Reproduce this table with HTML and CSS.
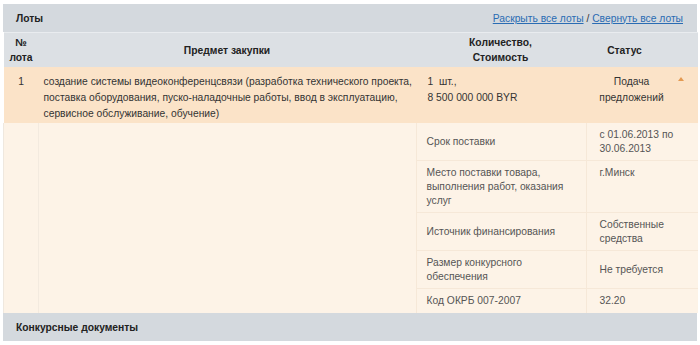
FILE: index.html
```html
<!DOCTYPE html>
<html lang="ru">
<head>
<meta charset="utf-8">
<title>Лоты</title>
<link rel="stylesheet" href="styles.css">
</head>
<body>
<div class="panel">
  <div class="bar">
    <span class="bar-title">Лоты</span>
    <span class="bar-links"><a href="#">Раскрыть все лоты</a> / <a href="#">Свернуть все лоты</a></span>
  </div>
  <table class="lots">
    <colgroup>
      <col class="c-no"><col class="c-subj"><col class="c-qty"><col class="c-status"><col class="c-arrow">
    </colgroup>
    <thead>
      <tr>
        <th>№<br>лота</th>
        <th>Предмет закупки</th>
        <th>Количество,<br>Стоимость</th>
        <th class="th-status">Статус</th>
        <th></th>
      </tr>
    </thead>
    <tbody>
      <tr class="lot-row">
        <td class="no">1</td>
        <td class="subj">создание системы видеоконференцсвязи (разработка технического проекта, поставка оборудования, пуско-наладочные работы, ввод в эксплуатацию, сервисное обслуживание, обучение)</td>
        <td class="qty">1&nbsp; шт.,<br>8 500 000 000 BYR</td>
        <td class="status">Подача<br>предложений</td>
        <td class="arrow"><span class="tri"></span></td>
      </tr>
      <tr class="detail-row">
        <td class="d-no"></td>
        <td class="d-subj"></td>
        <td colspan="3" class="d-info">
          <table class="info">
            <colgroup><col class="i-label"><col class="i-val"></colgroup>
            <tr><td>Срок поставки</td><td>с 01.06.2013 по<br>30.06.2013</td></tr>
            <tr><td>Место поставки товара,<br>выполнения работ, оказания<br>услуг</td><td class="top">г.Минск</td></tr>
            <tr><td>Источник финансирования</td><td>Собственные<br>средства</td></tr>
            <tr><td>Размер конкурсного<br>обеспечения</td><td>Не требуется</td></tr>
            <tr class="last"><td>Код ОКРБ 007-2007</td><td>32.20</td></tr>
          </table>
        </td>
      </tr>
    </tbody>
  </table>
  <div class="bar bar-bottom">
    <span class="bar-title">Конкурсные документы</span>
  </div>
</div>
</body>
</html>
```

FILE: styles.css
```css
html, body {
  margin: 0;
  padding: 0;
  background: #ffffff;
}
body {
  font-family: "Liberation Sans", Arial, sans-serif;
  font-size: 10.3px;
  color: #333333;
}
.panel {
  margin: 4px 0 0 3px;
  width: 694px;
}
.bar {
  height: 28px;
  background: #d4d9de;
  display: flex;
  align-items: center;
  justify-content: space-between;
  padding: 0 14px 0 13px;
  box-sizing: border-box;
}
.bar-title {
  font-weight: bold;
  color: #222;
}
.bar-links {
  color: #333;
}
.bar-links a {
  color: #2a6cb3;
  text-decoration: underline;
}
.bar-bottom {
  height: 28px;
}
.lots {
  width: 694px;
  border-collapse: collapse;
  table-layout: fixed;
}
.c-no { width: 35px; }
.c-subj { width: 377px; }
.c-qty { width: 170px; }
.c-status { width: 92px; }
.c-arrow { width: 20px; }
.lots th {
  background: #dce0e4;
  height: 34px;
  padding: 0;
  font-weight: bold;
  line-height: 15px;
  text-align: center;
  vertical-align: middle;
  color: #222;
  border-top: 1px solid #e9ecef;
}
.lots th.th-status {
  padding-right: 14px;
}
.lot-row td {
  background: #fbe3c8;
  vertical-align: top;
  line-height: 16px;
  padding: 7px 0 1px 0;
}
.lot-row .no {
  text-align: center;
}
.lot-row .subj {
  padding-left: 5px;
  padding-right: 0;
}
.lot-row .qty {
  padding-left: 12px;
}
.lot-row .status {
  text-align: center;
}
.lot-row .arrow {
  position: relative;
}
.tri {
  position: absolute;
  left: 0;
  top: 10px;
  width: 0;
  height: 0;
  border-left: 3.5px solid transparent;
  border-right: 3.5px solid transparent;
  border-bottom: 4px solid #e39a52;
}
.detail-row td {
  background: #fdf3e7;
  padding: 0;
  vertical-align: top;
}
.detail-row .d-no {
  border-left: 1px solid #efe8df;
  border-right: 1px solid #f3eadf;
}
.info {
  width: 100%;
  border-collapse: collapse;
  table-layout: fixed;
  color: #555555;
}
.i-label { width: 170px; }
.info td {
  line-height: 14px;
  padding: 5px 8px 4px 10px;
  vertical-align: middle;
  border-bottom: 1px solid #f6e8d8;
  border-left: 1px solid #f6e8d8;
}
.info td + td {
  padding-left: 13px;
}
.info td.top {
  vertical-align: top;
}
.info tr.last td {
  border-bottom: none;
  padding-bottom: 5px;
}
```
